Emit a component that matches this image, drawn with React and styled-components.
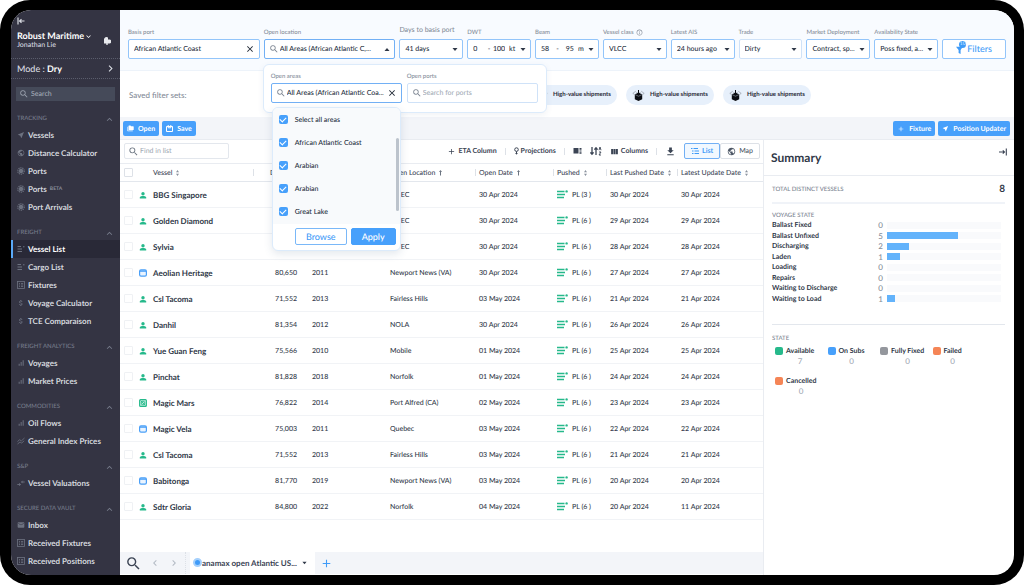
// src/pages/VesselListPage.jsx

import React from 'react';
import styled, { createGlobalStyle, css } from 'styled-components';
import {
  MdNearMe,
  MdPublic,
  MdSearch,
  MdClose,
  MdAttachMoney,
  MdSignalCellularAlt,
  MdEmail,
  MdFolderCopy,
  MdFileDownload,
  MdViewColumn,
  MdExpandLess,
  MdExpandMore,
  MdChevronLeft,
  MdChevronRight,
  MdAdd,
  MdInfoOutline,
} from 'react-icons/md';

const navSections = [
  {
    title: 'TRACKING',
    items: [
      { label: 'Vessels', icon: MdNearMe },
      { label: 'Distance Calculator', icon: MdPublic },
      { label: 'Ports', icon: PortIcon },
      { label: 'Ports', icon: PortIcon, beta: true },
      { label: 'Port Arrivals', icon: PortIcon },
    ],
  },
  {
    title: 'FREIGHT',
    items: [
      { label: 'Vessel List', icon: ListDotIcon, active: true },
      { label: 'Cargo List', icon: ListDotIcon },
      { label: 'Fixtures', icon: SheetIcon },
      { label: 'Voyage Calculator', icon: MdAttachMoney },
      { label: 'TCE Comparaison', icon: MdAttachMoney },
    ],
  },
  {
    title: 'FREIGHT ANALYTICS',
    items: [
      { label: 'Voyages', icon: MdSignalCellularAlt },
      { label: 'Market Prices', icon: MdSignalCellularAlt },
    ],
  },
  {
    title: 'COMMODITIES',
    items: [
      { label: 'Oil Flows', icon: MdSignalCellularAlt },
      { label: 'General Index Prices', icon: TrendIcon },
    ],
  },
  { title: 'S&P', items: [{ label: 'Vessel Valuations', icon: ValuationIcon }] },
  {
    title: 'SECURE DATA VAULT',
    items: [
      { label: 'Inbox', icon: MdEmail },
      { label: 'Received Fixtures', icon: SheetIcon },
      { label: 'Received Positions', icon: SheetIcon },
    ],
  },
];

const vessels = [
  ['person', 'BBG Singapore', '', '', 'US EC', '30 Apr 2024', 3, '30 Apr 2024', '30 Apr 2024'],
  ['person', 'Golden Diamond', '', '', 'US EC', '30 Apr 2024', 6, '29 Apr 2024', '29 Apr 2024'],
  ['person', 'Sylvia', '', '', 'US EC', '30 Apr 2024', 6, '28 Apr 2024', '28 Apr 2024'],
  ['window', 'Aeolian Heritage', '80,650', '2011', 'Newport News (VA)', '30 Apr 2024', 6, '27 Apr 2024', '27 Apr 2024'],
  ['person', 'Csl Tacoma', '71,552', '2013', 'Fairless Hills', '03 May 2024', 6, '21 Apr 2024', '21 Apr 2024'],
  ['person', 'Danhil', '81,354', '2012', 'NOLA', '30 Apr 2024', 6, '26 Apr 2024', '26 Apr 2024'],
  ['person', 'Yue Guan Feng', '75,566', '2010', 'Mobile', '01 May 2024', 6, '25 Apr 2024', '25 Apr 2024'],
  ['person', 'Pinchat', '81,828', '2018', 'Norfolk', '01 May 2024', 6, '24 Apr 2024', '24 Apr 2024'],
  ['blocked', 'Magic Mars', '76,822', '2014', 'Port Alfred (CA)', '02 May 2024', 6, '23 Apr 2024', '23 Apr 2024'],
  ['window', 'Magic Vela', '75,003', '2011', 'Quebec', '03 May 2024', 6, '22 Apr 2024', '22 Apr 2024'],
  ['person', 'Csl Tacoma', '71,552', '2013', 'Fairless Hills', '03 May 2024', 6, '21 Apr 2024', '21 Apr 2024'],
  ['window', 'Babitonga', '81,770', '2019', 'Newport News (VA)', '03 May 2024', 6, '20 Apr 2024', '20 Apr 2024'],
  ['person', 'Sdtr Gloria', '84,800', '2022', 'Norfolk', '04 May 2024', 6, '20 Apr 2024', '11 Apr 2024'],
];

const areas = ['Select all areas', 'African Atlantic Coast', 'Arabian', 'Arabian', 'Great Lake'];

const voyageStates = [
  { label: 'Ballast Fixed', count: 0, share: 0 },
  { label: 'Ballast Unfixed', count: 5, share: 62 },
  { label: 'Discharging', count: 2, share: 19 },
  { label: 'Laden', count: 1, share: 11 },
  { label: 'Loading', count: 0, share: 0 },
  { label: 'Repairs', count: 0, share: 0 },
  { label: 'Waiting to Discharge', count: 0, share: 0 },
  { label: 'Waiting to Load', count: 1, share: 7 },
];

const legend = [
  { label: 'Available', count: 7, color: '#26b98b' },
  { label: 'On Subs', count: 0, color: '#47a0fb' },
  { label: 'Fully Fixed', count: 0, color: '#94979d' },
  { label: 'Failed', count: 0, color: '#f58556' },
  { label: 'Cancelled', count: 0, color: '#f58556' },
];

export default function App() {
  return (
    <>
      <GlobalStyle />
      <Frame>
        <Screen>
          <Sidebar />
          <Main>
            <FilterBar />
            <SavedSets>
              <SavedLabel>Saved filter sets:</SavedLabel>
              {[1, 2, 3].map((n) => (
                <Chip key={n}>
                  <PackageIcon />
                  High-value shipments
                </Chip>
              ))}
            </SavedSets>
            <Toolbar>
              <PrimaryButton>
                <MdFolderCopy size={7} />
                Open
              </PrimaryButton>
              <PrimaryButton>
                <SaveIcon />
                Save
              </PrimaryButton>
              <Spacer />
              <PrimaryButton>
                <MdAdd size={8} />
                Fixture
              </PrimaryButton>
              <PrimaryButton>
                <MdNearMe size={7} />
                Position Updater
              </PrimaryButton>
            </Toolbar>
            <Workspace>
              <ListPanel>
                <ListActions />
                <VesselTable />
                <Spacer />
                <TabBar />
              </ListPanel>
              <Summary />
            </Workspace>
          </Main>
        </Screen>
      </Frame>
    </>
  );
}

function Sidebar() {
  return (
    <Side>
      <CollapseButton aria-label="Collapse menu">
        <svg width="8" height="8" viewBox="0 0 8 8" fill="none" stroke="currentColor" strokeWidth="1.2">
          <path d="M1 0.5v7M2.5 4H7.5M4.5 2.2L2.6 4l1.9 1.8" />
        </svg>
      </CollapseButton>
      <Account>
        <div>
          <AccountName>
            Robust Maritime
            <MdExpandMore size={9} />
          </AccountName>
          <AccountUser>Jonathan Lie</AccountUser>
        </div>
        <NoticeButton aria-label="Notifications">
          <svg width="8" height="9" viewBox="0 0 8 9" fill="currentColor">
            <path d="M1 6.5V3.5a2.5 2.5 0 0 1 4-2v2h1.6a2 2 0 0 1-.6 4H1z" />
            <circle cx="4" cy="8" r="0.9" />
          </svg>
        </NoticeButton>
      </Account>
      <Mode>
        <span>
          Mode : <b>Dry</b>
        </span>
        <MdChevronRight size={13} />
      </Mode>
      <SideSearch>
        <MdSearch size={10} />
        <input type="search" aria-label="Search menu" placeholder="Search" />
      </SideSearch>
      <nav>
        {navSections.map((section) => (
          <NavSection key={section.title}>
            <NavTitle>
              {section.title}
              <MdExpandLess size={11} />
            </NavTitle>
            {section.items.map(({ label, icon: Icon, active, beta }, i) => (
              <NavItem key={i} href="#" $active={active}>
                <Icon size={8} />
                {label}
                {beta && <Beta>BETA</Beta>}
              </NavItem>
            ))}
          </NavSection>
        ))}
      </nav>
    </Side>
  );
}

function SelectField({ id, label, value, large, info, soft }) {
  return (
    <Field>
      <FieldLabel htmlFor={id} $large={large}>
        {label}
        {info && <MdInfoOutline size={7} />}
      </FieldLabel>
      <Box $soft={soft}>
        <Select id={id}>
          <option>{value}</option>
        </Select>
        <Caret />
      </Box>
    </Field>
  );
}

function RangeField({ id, label, from, to, unit }) {
  return (
    <Field>
      <FieldLabel htmlFor={id}>{label}</FieldLabel>
      <Box>
        <RangeInput id={id} defaultValue={from} />
        <span>-</span>
        <RangeInput aria-label={`${label} to`} defaultValue={to} $end />
        <UnitSelect aria-label={`${label} unit`}>
          <option>{unit}</option>
        </UnitSelect>
        <Caret />
      </Box>
    </Field>
  );
}

function FilterBar() {
  return (
    <Filters>
      <Field $wide>
        <FieldLabel htmlFor="basis">Basis port</FieldLabel>
        <Box>
          <TextInput id="basis" defaultValue="African Atlantic Coast" />
          <ClearButton aria-label="Clear basis port">
            <MdClose size={10} />
          </ClearButton>
        </Box>
      </Field>
      <Field $wide>
        <FieldLabel htmlFor="location">Open location</FieldLabel>
        <Box $focus $search>
          <MdSearch size={10} />
          <TextInput id="location" defaultValue="All Areas (African Atlantic C,..." />
          <Caret up />
        </Box>
        <LocationPopover />
      </Field>
      <SelectField id="days" label="Days to basis port" value="41 days" large />
      <RangeField id="dwt" label="DWT" from="0" to="100" unit="kt" />
      <RangeField id="beam" label="Beam" from="58" to="95" unit="m" />
      <SelectField id="class" label="Vessel class" value="VLCC" info />
      <SelectField id="ais" label="Latest AIS" value="24 hours ago" />
      <SelectField id="trade" label="Trade" value="Dirty" soft />
      <SelectField id="market" label="Market Deployment" value="Contract, sp..." />
      <SelectField id="state" label="Availability State" value="Poss fixed, a..." />
      <FiltersButton>
        <FunnelWrap>
          <FunnelIcon />
          <FilterCount>10</FilterCount>
        </FunnelWrap>
        Filters
      </FiltersButton>
    </Filters>
  );
}

function LocationPopover() {
  return (
    <Popover>
      <Field>
        <FieldLabel htmlFor="areas">Open areas</FieldLabel>
        <Box $focus $search>
          <MdSearch size={10} />
          <TextInput id="areas" defaultValue="All Areas (African Atlantic Coa..." />
          <ClearButton aria-label="Clear areas">
            <MdClose size={10} />
          </ClearButton>
        </Box>
        <AreaMenu>
          <AreaList>
            {areas.map((area, i) => (
              <AreaOption key={i}>
                <Tick type="checkbox" defaultChecked />
                {area}
              </AreaOption>
            ))}
            <ScrollThumb />
          </AreaList>
          <AreaFooter>
            <MenuButton>Browse</MenuButton>
            <MenuButton $primary>Apply</MenuButton>
          </AreaFooter>
        </AreaMenu>
      </Field>
      <Field>
        <FieldLabel htmlFor="ports">Open ports</FieldLabel>
        <Box $soft $search>
          <MdSearch size={10} />
          <TextInput id="ports" placeholder="Search for ports" />
        </Box>
      </Field>
    </Popover>
  );
}

function ListActions() {
  return (
    <Actions>
      <FindBox>
        <MdSearch size={11} />
        <TextInput type="search" aria-label="Find in list" placeholder="Find in list" />
      </FindBox>
      <Spacer />
      <ActionButton>
        <MdAdd size={9} />
        ETA Column
      </ActionButton>
      <Divider />
      <ActionButton>
        <PinIcon />
        Projections
      </ActionButton>
      <Divider />
      <IconGroup>
        <ActionButton aria-label="Density">
          <svg width="9" height="8" viewBox="0 0 9 8" fill="currentColor">
            <path d="M0.5 1h5v5.5h-5zM6.5 1h2v1.8h-2zM6.5 3.4h2v1.2h-2zM6.5 5.2h2v1.6h-2z" />
          </svg>
        </ActionButton>
        <ActionButton aria-label="Sort">
          <svg width="12" height="10" viewBox="0 0 12 10" fill="none" stroke="currentColor" strokeWidth="1.3">
            <path d="M2 1v7M0.4 6.4L2 8.2l1.6-1.8M6 9V2M4.4 3.6L6 1.8l1.6 1.8" />
            <path d="M9 4.2L10 1l1 3.2M9 6h2L9 9h2" strokeWidth="0.9" />
          </svg>
        </ActionButton>
        <ActionButton>
          <MdViewColumn size={9} />
          Columns
        </ActionButton>
      </IconGroup>
      <Divider />
      <ActionButton aria-label="Download">
        <MdFileDownload size={11} />
      </ActionButton>
      <Toggle>
        <ToggleButton $active>
          <svg width="8" height="8" viewBox="0 0 8 8" fill="none" stroke="currentColor">
            <path d="M0 1.5h1.5M2.5 1.5H7M1 4h1.5M3.5 4H8M1 6.5h1.5M3.5 6.5H8" />
          </svg>
          List
        </ToggleButton>
        <ToggleButton>
          <MdPublic size={9} />
          Map
        </ToggleButton>
      </Toggle>
    </Actions>
  );
}

function VesselTable() {
  return (
    <Table>
      <colgroup>
        <Col $w={17} />
        <Col $w={12} />
        <col />
        <Col $w={55} />
        <Col $w={78} />
        <Col $w={89} />
        <Col $w={78} />
        <Col $w={53} />
        <Col $w={71} />
        <Col $w={86} />
      </colgroup>
      <thead>
        <tr>
          <Th>
            <RowCheck type="checkbox" aria-label="Select all vessels" $strong />
          </Th>
          <Th aria-label="Type" />
          <Th>Vessel <SortIcon /></Th>
          <Th $line $indent>DWT</Th>
          <Th aria-label="Built" />
          <Th>Open Location <SortIcon up /></Th>
          <Th $line>Open Date <SortIcon up /></Th>
          <Th $line>Pushed <SortIcon /></Th>
          <Th $line>Last Pushed Date <SortIcon /></Th>
          <Th $line>Latest Update Date <SortIcon /></Th>
        </tr>
      </thead>
      <tbody>
        {vessels.map(([type, name, dwt, built, port, open, pushed, lastPushed, updated], i) => (
          <tr key={i}>
            <Td>
              <RowCheck type="checkbox" aria-label={`Select ${name}`} />
            </Td>
            <Td>
              <TypeIcon type={type} />
            </Td>
            <Td $name>{name}</Td>
            <Td $right>{dwt}</Td>
            <Td>{built}</Td>
            <Td>{port}</Td>
            <Td>{open}</Td>
            <Td>
              <Pushed>
                <PushedIcon />
                PL ({pushed} )
              </Pushed>
            </Td>
            <Td>{lastPushed}</Td>
            <Td>{updated}</Td>
          </tr>
        ))}
      </tbody>
    </Table>
  );
}

function TabBar() {
  return (
    <Tabs>
      <TabTools>
        <PlainButton aria-label="Search tabs">
          <MdSearch size={17} />
        </PlainButton>
        <PlainButton aria-label="Previous" $dim>
          <MdChevronLeft size={12} />
        </PlainButton>
        <PlainButton aria-label="Next" $dim>
          <MdChevronRight size={12} />
        </PlainButton>
      </TabTools>
      <Tab>
        <TabDot />
        anamax open Atlantic US...
        <Caret small />
      </Tab>
      <AddTab aria-label="Add tab">
        <MdAdd size={13} />
      </AddTab>
    </Tabs>
  );
}

function Summary() {
  return (
    <Aside>
      <SummaryHead>
        <h2>Summary</h2>
        <PlainButton aria-label="Collapse summary">
          <svg width="8" height="8" viewBox="0 0 8 8" fill="none" stroke="currentColor" strokeWidth="1.1">
            <path d="M7.3 0.5v7M0 4h5.5M3.8 2.3L5.5 4 3.8 5.7" />
          </svg>
        </PlainButton>
      </SummaryHead>
      <SummaryBody>
        <Total>
          <Caption>TOTAL DISTINCT VESSELS</Caption>
          <b>8</b>
        </Total>
        <VoyageSection>
          <Caption>VOYAGE STATE</Caption>
          <Bars>
            {voyageStates.map(({ label, count, share }) => (
              <BarRow key={label}>
                <b>{label}</b>
                <BarCount>{count}</BarCount>
                <Track>
                  <Bar style={{ width: `${share}%` }} />
                </Track>
              </BarRow>
            ))}
          </Bars>
        </VoyageSection>
        <StateSection>
          <Caption>STATE</Caption>
          <Legend>
            {legend.map(({ label, count, color }) => (
              <LegendItem key={label}>
                <Swatch $color={color} />
                <b>{label}</b>
                <LegendCount>{count}</LegendCount>
              </LegendItem>
            ))}
          </Legend>
        </StateSection>
      </SummaryBody>
    </Aside>
  );
}

// icons

function Caret({ up, small }) {
  return (
    <CaretSvg width={small ? 5 : 6} height={small ? 4 : 5} viewBox="0 0 6 4" fill="currentColor">
      <path d={up ? 'M0.5 3.5L3 0.5l2.5 3z' : 'M0.5 0.5L3 3.5l2.5-3z'} />
    </CaretSvg>
  );
}

function SortIcon({ up }) {
  return (
    <SortSvg width="5" height="6" viewBox="0 0 5 6" fill={up ? '#6b7480' : '#8b939f'}>
      <path d={up ? 'M2.5 0L4 2H3v3.4H2V2H1z' : 'M2.5 0L4 2.2H1zM2.5 6L4 3.8H1z'} />
    </SortSvg>
  );
}

function PortIcon() {
  return (
    <svg width="8" height="8" viewBox="0 0 8 8" fill="none" stroke="currentColor">
      <circle cx="4" cy="4" r="3.2" strokeDasharray="1.2 0.8" strokeWidth="1.2" />
      <circle cx="4" cy="4" r="2.2" fill="currentColor" stroke="none" />
    </svg>
  );
}

function ListDotIcon() {
  return (
    <svg width="8" height="8" viewBox="0 0 8 8" fill="none" stroke="currentColor">
      <path d="M0.5 1.5h3.5M0.5 4H5M0.5 6.5H5M6 1.8h1.5" />
    </svg>
  );
}

function SheetIcon() {
  return (
    <svg width="8" height="8" viewBox="0 0 8 8" fill="none" stroke="currentColor" strokeWidth="0.8">
      <rect x="0.5" y="0.5" width="7" height="7" />
      <path d="M2 2.5h1M2 4h1M2 5.5h1M4 2.5h2.2M4 4h2.2M4 5.5h2.2" />
    </svg>
  );
}

function TrendIcon() {
  return (
    <svg width="8" height="8" viewBox="0 0 8 8" fill="none" stroke="currentColor" strokeWidth="0.8">
      <path d="M0.5 4.5L2.5 2.8l2 1L7.5 1M0.5 7L3 5l1.7 1 2.5-2.2" />
    </svg>
  );
}

function ValuationIcon() {
  return (
    <svg width="8" height="8" viewBox="0 0 8 8" fill="none" stroke="currentColor" strokeWidth="0.9">
      <path d="M0.3 5.5h3M2.3 4.2l1.2 1.3-1.2 1.3M7.7 3h-3M5.6 1.8L4.5 3l1.1 1.2" />
    </svg>
  );
}

function SaveIcon() {
  return (
    <svg width="7" height="7" viewBox="0 0 7 7" fill="none" stroke="currentColor">
      <path d="M0.5 1.5h6v5h-6zM2.2 0v2.8h2.6V0" />
    </svg>
  );
}

function FunnelIcon() {
  return (
    <svg width="9" height="9" viewBox="0 0 9 9" fill="currentColor">
      <path d="M0 1.8h6.8L4.6 5v4L2.6 8V5z" />
    </svg>
  );
}

function PinIcon() {
  return (
    <svg width="5" height="8" viewBox="0 0 5 8" fill="none" stroke="currentColor">
      <circle cx="2.5" cy="2.6" r="1.8" />
      <path d="M2.5 4.4v3M1.5 6.5h2" />
    </svg>
  );
}

function PackageIcon() {
  return (
    <svg width="13" height="13" viewBox="0 0 13 13">
      <path d="M2.8 5.2l3.7-1.5 3.7 1.5v5L6.5 12l-3.7-1.8z" fill="#0b0d12" />
      <path d="M6.5 1v4M5.2 3.7l1.3 1.6 1.3-1.6" stroke="#0b0d12" fill="none" />
      <path d="M0.8 4.4l3-2.2M12.2 4.4l-3-2.2M0.8 4.4l1.6 1M12.2 4.4l-1.6 1" stroke="#8a8f98" strokeWidth="0.6" fill="none" />
      <path d="M3 5.6l3.5 1.6L10 5.6" stroke="#dbe8f6" strokeWidth="0.4" fill="none" />
    </svg>
  );
}

function PushedIcon() {
  return (
    <svg width="11" height="9" viewBox="0 0 11 9" fill="none" stroke="#26b98b" strokeWidth="1.4">
      <path d="M0 1.5h7.5M0 4.5h8M0 7.5h7" />
      <circle cx="9.6" cy="1.4" r="1.2" fill="#26b98b" stroke="none" />
    </svg>
  );
}

function TypeIcon({ type }) {
  if (type === 'window') {
    return (
      <svg width="8" height="8" viewBox="0 0 8 8">
        <rect x="0.6" y="0.8" width="6.8" height="6.4" rx="1.4" fill="#eaf4ff" stroke="#4ba0f8" strokeWidth="1.2" />
        <path d="M1 2.1h6" stroke="#4ba0f8" strokeWidth="1.4" />
      </svg>
    );
  }
  if (type === 'blocked') {
    return (
      <svg width="8" height="8" viewBox="0 0 8 8" fill="none" stroke="#26b98b">
        <rect x="0.6" y="0.6" width="6.8" height="6.8" rx="1" fill="#b9ead9" strokeWidth="1.1" />
        <circle cx="4" cy="4" r="1.8" strokeWidth="0.8" />
        <path d="M1.6 1.6l4.8 4.8" strokeWidth="0.9" />
      </svg>
    );
  }
  return (
    <svg width="8" height="8" viewBox="0 0 8 8" fill="#26b98b">
      <circle cx="4" cy="2.8" r="1.7" />
      <path d="M0.8 7.6V6.4c0-1 1.6-1.5 3.2-1.5s3.2.5 3.2 1.5v1.2z" />
    </svg>
  );
}

// styles

const GlobalStyle = createGlobalStyle`
  * {
    box-sizing: border-box;
  }
  body {
    margin: 0;
    background: #fff;
    color: #2f3847;
    font-family: Lato, sans-serif;
    font-size: 7px;
    font-weight: 500;
    line-height: 10px;
    text-rendering: geometricPrecision;
  }
  button, input, select {
    margin: 0;
    padding: 0;
    border: 0;
    background: transparent;
    color: inherit;
    font: inherit;
    text-rendering: inherit;
    outline: none;
  }
  button {
    display: inline-flex;
    align-items: center;
    justify-content: center;
    white-space: nowrap;
    cursor: pointer;
  }
  input::placeholder {
    color: #a3abb6;
    opacity: 1;
  }
  b {
    font-weight: 700;
  }
  svg {
    flex: none;
  }
`;

const Frame = styled.div`
  display: flex;
  min-height: 100vh;
  padding: 10px 10px 10px 11px;
  border-radius: 30px;
  background: #000;
`;

const Screen = styled.div`
  flex: 1;
  min-width: 0;
  display: grid;
  grid-template-columns: 109px 1fr;
  border-radius: 20px;
  overflow: hidden;
  background: #fff;
`;

const Side = styled.aside`
  background: #343443;
  color: #d9dce2;
`;

const CollapseButton = styled.button`
  display: flex;
  margin: 7px 0 0 6px;
  height: 8px;
`;

const Account = styled.div`
  display: flex;
  align-items: center;
  justify-content: space-between;
  margin-top: 6px;
  padding: 0 9px 8px 6px;
  border-bottom: 1px dotted #5a5d6c;
`;

const AccountName = styled.div`
  display: flex;
  align-items: center;
  font-size: 9px;
  font-weight: 700;
  color: #fff;
`;

const AccountUser = styled.div`
  line-height: 9px;
`;

const NoticeButton = styled.button`
  color: #e8eaee;
`;

const Mode = styled.div`
  display: flex;
  align-items: center;
  justify-content: space-between;
  height: 20px;
  padding: 0 3px 0 6px;
  border-bottom: 1px dotted #5a5d6c;
  font-size: 9px;
  b {
    color: #fff;
  }
`;

const SideSearch = styled.label`
  display: flex;
  align-items: center;
  gap: 2px;
  height: 14px;
  margin: 8px 5px 11px 5px;
  padding: 0 3px;
  background: #454a59;
  color: #9aa1ad;
  input {
    flex: 1;
    min-width: 0;
  }
`;

const NavSection = styled.section`
  & + & {
    margin-top: 10px;
  }
`;

const NavTitle = styled.div`
  display: flex;
  align-items: center;
  justify-content: space-between;
  height: 14px;
  padding: 0 5px 0 6px;
  font-size: 6px;
  color: #777c8b;
`;

const NavItem = styled.a`
  display: flex;
  align-items: center;
  gap: 3px;
  height: 18px;
  padding-left: 4px;
  border-left: 2px solid transparent;
  color: #d5d8de;
  font-size: 8px;
  font-weight: 700;
  text-decoration: none;
  white-space: nowrap;
  svg {
    color: #6d7280;
  }
  ${({ $active }) =>
    $active &&
    css`
      border-left-color: #5aa9f8;
      background: #292937;
      color: #fff;
    `}
`;

const Beta = styled.span`
  font-size: 5px;
  color: #8d929e;
`;

const Main = styled.main`
  display: flex;
  flex-direction: column;
  min-width: 0;
`;

const Filters = styled.div`
  display: grid;
  grid-template-columns: repeat(13, minmax(0, 1fr));
  align-items: end;
  gap: 4px;
  padding: 15px 8px 11px;
  border-bottom: 1px solid #edf3fa;
  background: #f8fbff;
`;

const Field = styled.div`
  position: relative;
  min-width: 0;
  grid-column: span ${({ $wide }) => ($wide ? 2 : 1)};
`;

const FieldLabel = styled.label`
  display: flex;
  align-items: center;
  gap: 2px;
  margin-bottom: ${({ $large }) => ($large ? 4 : 2)}px;
  font-size: ${({ $large }) => ($large ? 7 : 6)}px;
  line-height: ${({ $large }) => ($large ? 10 : 9)}px;
  color: #858d99;
  white-space: nowrap;
`;

const Box = styled.div`
  display: flex;
  align-items: center;
  gap: ${({ $search }) => ($search ? 1 : 2)}px;
  height: 20px;
  padding: 0 4px 0 ${({ $search }) => ($search ? 4 : 5)}px;
  border: 1px solid
    ${({ $focus, $soft }) => ($focus ? '#72b0f5' : $soft ? '#cfe2f8' : '#93c5fa')};
  border-radius: 2px;
  background: #fff;
  color: #252e3d;
  > svg {
    color: #7b8491;
  }
`;

const TextInput = styled.input`
  flex: 1;
  min-width: 0;
  width: 100%;
  text-overflow: ellipsis;
`;

const Select = styled.select`
  flex: 1;
  min-width: 0;
  appearance: none;
`;

const RangeInput = styled.input`
  flex: 1;
  min-width: 0;
  width: 100%;
  text-align: ${({ $end }) => ($end ? 'right' : 'left')};
`;

const UnitSelect = styled.select`
  margin: 0 2px;
  appearance: none;
`;

const CaretSvg = styled.svg`
  && {
    color: #2f3847;
  }
`;

const SortSvg = styled.svg`
  margin-left: 1px;
  vertical-align: middle;
`;

const ClearButton = styled.button`
  color: #1b2330;
`;

const FiltersButton = styled.button`
  gap: 2px;
  height: 20px;
  border: 1px solid #93c5fa;
  border-radius: 2px;
  background: #fff;
  color: #3f9bf8;
  font-size: 9px;
`;

const FunnelWrap = styled.span`
  position: relative;
  display: flex;
`;

const FilterCount = styled.span`
  position: absolute;
  top: -4px;
  right: -1px;
  width: 7px;
  height: 7px;
  border-radius: 50%;
  background: #3f9bf8;
  color: #d4e9ff;
  font-size: 5px;
  line-height: 7px;
`;

const Popover = styled.div`
  position: absolute;
  z-index: 2;
  top: calc(100% + 5px);
  left: -1px;
  display: grid;
  grid-template-columns: 131px 131px;
  gap: 5px;
  padding: 7px 8px 9px 7px;
  border: 1px solid #dcebfb;
  border-radius: 6px;
  background: #fff;
  box-shadow: 0 2px 6px rgba(60, 90, 130, 0.08);
`;

const AreaMenu = styled.div`
  position: absolute;
  top: calc(100% + 4px);
  left: 1px;
  right: 1px;
  border: 1px solid #dcebfb;
  border-radius: 6px;
  background: #fff;
  box-shadow: 0 3px 8px rgba(60, 90, 130, 0.14);
  overflow: hidden;
`;

const AreaList = styled.div`
  position: relative;
  padding-bottom: 1px;
  background: #f8fafc;
`;

const AreaOption = styled.label`
  display: flex;
  align-items: center;
  gap: 7px;
  height: 23px;
  padding-left: 6px;
  color: #252e3d;
`;

const Tick = styled.input`
  appearance: none;
  display: grid;
  place-items: center;
  width: 9px;
  height: 9px;
  border-radius: 2px;
  background: #47a0fb;
  &:checked::after {
    content: '';
    width: 5px;
    height: 3px;
    margin-bottom: 1px;
    border: solid #fff;
    border-width: 0 0 1px 1px;
    transform: rotate(-45deg);
  }
`;

const ScrollThumb = styled.div`
  position: absolute;
  top: 30px;
  right: 1px;
  width: 3px;
  height: 73px;
  border-radius: 2px;
  background: #bcc3cc;
`;

const AreaFooter = styled.div`
  display: flex;
  justify-content: flex-end;
  gap: 4px;
  padding: 4px 4px 5px;
`;

const MenuButton = styled.button`
  height: 17px;
  padding: 0 10px;
  border: 1px solid ${({ $primary }) => ($primary ? '#47a0fb' : '#7ab8f8')};
  border-radius: 2px;
  background: ${({ $primary }) => ($primary ? '#47a0fb' : '#fff')};
  color: ${({ $primary }) => ($primary ? '#fff' : '#3f9bf8')};
  font-size: 9px;
`;

const SavedSets = styled.div`
  display: flex;
  align-items: center;
  gap: 9px;
  height: 46px;
  padding: 2px 9px 0;
`;

const SavedLabel = styled.span`
  flex: 0 1 391px;
  font-size: 8px;
  color: #858d99;
`;

const Chip = styled.button`
  gap: 5px;
  height: 20px;
  padding: 0 6px;
  border-radius: 10px;
  background: #e7f0fb;
  color: #1f2633;
  font-size: 6px;
  font-weight: 700;
`;

const Toolbar = styled.div`
  display: flex;
  gap: 3px;
  padding: 4px 4px 3px 3px;
  border-bottom: 1px solid #e9ecf1;
  background: #f3f5f9;
`;

const Spacer = styled.div`
  flex: 1;
`;

const PrimaryButton = styled.button`
  gap: 4px;
  height: 15px;
  padding: 0 4px;
  border-radius: 2px;
  background: #47a0fb;
  color: #fff;
  font-weight: 700;
`;

const Workspace = styled.div`
  flex: 1;
  display: grid;
  grid-template-columns: minmax(0, 1fr) 251px;
`;

const ListPanel = styled.section`
  display: flex;
  flex-direction: column;
  min-width: 0;
  padding-bottom: 1px;
`;

const Actions = styled.div`
  display: flex;
  align-items: center;
  gap: 8px;
  padding: 3px 3px 4px 4px;
  border-bottom: 1px solid #e9ecf1;
`;

const FindBox = styled.label`
  display: flex;
  align-items: center;
  gap: 1px;
  width: 105px;
  height: 16px;
  padding: 0 3px;
  border: 1px solid #e3e7ed;
  border-radius: 2px;
  color: #6b7480;
`;

const ActionButton = styled.button`
  gap: 2px;
  color: #3b4454;
  font-weight: 700;
`;

const Divider = styled.span`
  width: 1px;
  height: 7px;
  background: #dde1e7;
`;

const IconGroup = styled.div`
  display: flex;
  gap: 8px;
`;

const Toggle = styled.div`
  display: flex;
`;

const ToggleButton = styled.button`
  gap: 3px;
  height: 16px;
  padding: 0 6px;
  border: 1px solid ${({ $active }) => ($active ? '#72b0f5' : '#dde1e7')};
  border-radius: 2px;
  background: ${({ $active }) => ($active ? '#f1f8ff' : '#fff')};
  color: ${({ $active }) => ($active ? '#3f9bf8' : '#4d5766')};
  font-weight: ${({ $active }) => ($active ? 700 : 500)};
`;

const Table = styled.table`
  width: 100%;
  table-layout: fixed;
  border-collapse: separate;
  border-spacing: 0;
`;

const Col = styled.col`
  width: ${({ $w }) => $w}px;
`;

const Th = styled.th`
  height: 18px;
  padding: 0 0 0 ${({ $indent }) => ($indent ? 17 : 4)}px;
  border-bottom: 1px solid #e3e7ed;
  background: ${({ $line }) =>
    $line ? 'linear-gradient(#dde1e7, #dde1e7) 0 50% / 1px 7px no-repeat' : 'none'};
  font-weight: 500;
  text-align: left;
  white-space: nowrap;
  color: #3b4454;
`;

const Td = styled.td`
  height: 26px;
  padding: 0 0 0 4px;
  border-bottom: 1px solid #f1f3f6;
  white-space: nowrap;
  ${({ $name }) =>
    $name &&
    css`
      font-size: 8px;
      font-weight: 700;
    `}
  ${({ $right }) =>
    $right &&
    css`
      padding-right: 11px;
      text-align: right;
    `}
  > svg {
    display: block;
    margin-left: -2px;
  }
`;

const RowCheck = styled.input`
  appearance: none;
  display: block;
  width: 9px;
  height: 9px;
  border: 1px solid ${({ $strong }) => ($strong ? '#dde1e7' : '#eff1f4')};
  border-radius: 1px;
`;

const Pushed = styled.span`
  display: flex;
  align-items: center;
  gap: 4px;
`;

const Tabs = styled.div`
  display: flex;
  height: 22px;
  background: #f3f5f9;
`;

const TabTools = styled.div`
  display: flex;
  align-items: center;
  gap: 7px;
  width: 66px;
  padding-left: 5px;
  border-right: 1px dotted #dde1e7;
`;

const PlainButton = styled.button`
  color: ${({ $dim }) => ($dim ? '#b3bac4' : '#3b4454')};
`;

const Tab = styled.button`
  position: relative;
  gap: 5px;
  margin-left: 4px;
  padding: 0 8px 0 12px;
  background: #fff;
  font-size: 8px;
  font-weight: 700;
  color: #3b4454;
`;

const TabDot = styled.span`
  position: absolute;
  top: 6px;
  left: 3px;
  width: 9px;
  height: 9px;
  border: 2px solid #a5d0fc;
  border-radius: 50%;
  background: #3f9bf8;
`;

const AddTab = styled(PlainButton)`
  width: 24px;
  && {
    color: #3f9bf8;
  }
`;

const Aside = styled.aside`
  border-left: 1px solid #e9ecf1;
`;

const SummaryHead = styled.header`
  display: flex;
  justify-content: space-between;
  align-items: flex-start;
  padding: 8px 7px 9px 7px;
  border-bottom: 1px solid #e9ecf1;
  h2 {
    margin: 2px 0 0;
    font-size: 12px;
    line-height: 16px;
  }
`;

const SummaryBody = styled.div`
  padding: 0 9px 0 8px;
`;

const Caption = styled.div`
  font-size: 6px;
  line-height: 9px;
  color: #7b8491;
`;

const Total = styled.div`
  display: flex;
  align-items: center;
  justify-content: space-between;
  height: 28px;
  border-bottom: 2px solid #f0f3f8;
  b {
    font-size: 10px;
  }
`;

const VoyageSection = styled.section`
  padding: 7px 0 20px;
  border-bottom: 1px solid #e3e7ed;
`;

const Bars = styled.div`
  display: grid;
  grid-auto-rows: 1fr;
  height: 84px;
`;

const BarRow = styled.div`
  display: grid;
  grid-template-columns: 1fr 12px 114px;
  align-items: center;
  column-gap: 4px;
  padding-right: 4px;
`;

const BarCount = styled.span`
  text-align: right;
  font-size: 8px;
  color: #858d99;
`;

const Track = styled.div`
  height: 7px;
  background: #f9fafc;
`;

const Bar = styled.div`
  height: 100%;
  background: #63b3fb;
`;

const StateSection = styled.section`
  padding-top: 9px;
`;

const Legend = styled.div`
  display: grid;
  grid-template-columns: repeat(4, 1fr);
  row-gap: 10px;
  margin: 3px 20px 0 3px;
`;

const LegendItem = styled.div`
  display: grid;
  grid-template-columns: 8px max-content;
  align-items: center;
  column-gap: 3px;
`;

const Swatch = styled.span`
  height: 8px;
  border-radius: 2px;
  background: ${({ $color }) => $color};
`;

const LegendCount = styled.span`
  grid-column: 2;
  text-align: center;
  font-size: 8px;
  color: #a3abb6;
`;
